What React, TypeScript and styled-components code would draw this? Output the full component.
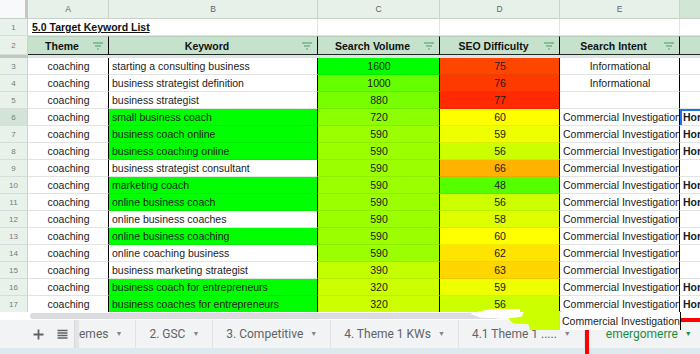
import styled, { createGlobalStyle } from 'styled-components';

const GlobalStyle = createGlobalStyle`
  html, body { margin: 0; padding: 0; }
  body {
    width: 700px;
    height: 354px;
    overflow: hidden;
    background: #fff;
    font-family: 'Liberation Sans', Arial, sans-serif;
  }
`;

const COLS = '28px 81px 209px 122px 120px 120px 40px';
const GRID = '#e2e3e3';

type Row = {
  kw: string;
  kwGreen: boolean;
  vol: number;
  volBg: string;
  diff: number;
  diffBg: string;
  intent: string;
  f: string;
};

const rows: Row[] = [
  { kw: 'starting a consulting business', kwGreen: false, vol: 1600, volBg: '#00ff00', diff: 75, diffBg: '#ff4600', intent: 'Informational', f: '' },
  { kw: 'business strategist definition', kwGreen: false, vol: 1000, volBg: '#66ff00', diff: 76, diffBg: '#ff3a00', intent: 'Informational', f: '' },
  { kw: 'business strategist', kwGreen: false, vol: 880, volBg: '#77ff00', diff: 77, diffBg: '#ff2a00', intent: '', f: '' },
  { kw: 'small business coach', kwGreen: true, vol: 720, volBg: '#8cff00', diff: 60, diffBg: '#ffff00', intent: 'Commercial Investigation', f: 'Hor' },
  { kw: 'business coach online', kwGreen: true, vol: 590, volBg: '#9cff00', diff: 59, diffBg: '#eeff00', intent: 'Commercial Investigation', f: 'Hor' },
  { kw: 'business coaching online', kwGreen: true, vol: 590, volBg: '#9cff00', diff: 56, diffBg: '#ccff00', intent: 'Commercial Investigation', f: 'Hor' },
  { kw: 'business strategist consultant', kwGreen: false, vol: 590, volBg: '#9cff00', diff: 66, diffBg: '#ffb200', intent: 'Commercial Investigation', f: '' },
  { kw: 'marketing coach', kwGreen: true, vol: 590, volBg: '#9cff00', diff: 48, diffBg: '#55ff00', intent: 'Commercial Investigation', f: 'Hor' },
  { kw: 'online business coach', kwGreen: true, vol: 590, volBg: '#9cff00', diff: 56, diffBg: '#ccff00', intent: 'Commercial Investigation', f: 'Hor' },
  { kw: 'online business coaches', kwGreen: false, vol: 590, volBg: '#9cff00', diff: 58, diffBg: '#ddff00', intent: 'Commercial Investigation', f: '' },
  { kw: 'online business coaching', kwGreen: true, vol: 590, volBg: '#9cff00', diff: 60, diffBg: '#ffff00', intent: 'Commercial Investigation', f: 'Hor' },
  { kw: 'online coaching business', kwGreen: false, vol: 590, volBg: '#9cff00', diff: 62, diffBg: '#ffe400', intent: 'Commercial Investigation', f: '' },
  { kw: 'business marketing strategist', kwGreen: false, vol: 390, volBg: '#c4ff00', diff: 63, diffBg: '#ffd600', intent: 'Commercial Investigation', f: '' },
  { kw: 'business coach for entrepreneurs', kwGreen: true, vol: 320, volBg: '#ccff00', diff: 59, diffBg: '#eeff00', intent: 'Commercial Investigation', f: 'Hor' },
  { kw: 'business coaches for entrepreneurs', kwGreen: true, vol: 320, volBg: '#ccff00', diff: 56, diffBg: '#ccff00', intent: 'Commercial Investigation', f: 'Hor' },
];

const headers = ['Theme', 'Keyword', 'Search Volume', 'SEO Difficulty', 'Search Intent'];

const tabs = ['emes', '2. GSC', '3. Competitive', '4. Theme 1 KWs', '4.1 Theme 1 .....'];

const Page = styled.div`
  position: relative;
  width: 700px;
  height: 354px;
  overflow: hidden;
  display: flex;
  flex-direction: column;
`;

const Sheet = styled.div`
  height: 312px;
  flex: none;
  overflow: hidden;
  display: flex;
  flex-direction: column;
`;

const GridRow = styled.div<{ $h: number }>`
  display: grid;
  grid-template-columns: ${COLS};
  height: ${(p) => p.$h}px;
  flex: none;
`;

const Corner = styled.div`
  background: #f8f9fa;
  border-right: 3px solid #c4c7c5;
  border-bottom: 1px solid #c7cfc9;
`;

const ColLetter = styled.div<{ $sel?: boolean }>`
  background: ${(p) => (p.$sel ? '#d2e6d6' : '#e8f0ea')};
  border-right: 1px solid #cbd3cd;
  border-bottom: 1px solid #c7cfc9;
  color: #5f6368;
  font-size: 8.5px;
  display: flex;
  align-items: center;
  justify-content: center;
`;

const RowNum = styled.div<{ $sel?: boolean }>`
  background: ${(p) => (p.$sel ? '#d3e3d7' : '#e9f1eb')};
  border-right: 1px solid #cbd3cd;
  border-bottom: 1px solid #d6ddd8;
  color: #777b78;
  font-size: 8px;
  display: flex;
  align-items: center;
  justify-content: center;
`;

const Cell = styled.div<{ $bg?: string; $center?: boolean; $edge?: boolean; $bold?: boolean; $sel?: boolean }>`
  box-sizing: border-box;
  background: ${(p) => p.$bg ?? '#fff'};
  border-right: 1px solid ${(p) => (p.$edge ? '#000' : GRID)};
  border-bottom: 1px solid ${(p) => (p.$bg ? 'rgba(0, 0, 0, 0.07)' : GRID)};
  box-shadow: ${(p) => (p.$sel ? 'inset 2px 2px 0 #1a73e8' : 'none')};
  color: #1b1b1b;
  font-size: 10.5px;
  font-weight: ${(p) => (p.$bold ? 700 : 400)};
  padding: 0 2px 0 3px;
  display: flex;
  align-items: center;
  justify-content: ${(p) => (p.$center ? 'center' : 'flex-start')};
  white-space: nowrap;
  overflow: hidden;
`;

const Title = styled.div`
  grid-column: span 2;
  border-right: 1px solid ${GRID};
  border-bottom: 1px solid ${GRID};
  font-size: 10.5px;
  font-weight: 700;
  text-decoration: underline;
  color: #111;
  padding-left: 4px;
  display: flex;
  align-items: center;
`;

const HeadCell = styled.div<{ $edge?: boolean }>`
  background: #c6e2cc;
  border-right: 1px solid ${(p) => (p.$edge ? '#000' : '#c6e2cc')};
  border-bottom: 1px solid #1f2a22;
  border-top: 1px solid #b8cfbd;
  display: flex;
  align-items: center;
  padding: 0 5px 0 3px;
  font-size: 10.5px;
  font-weight: 700;
  color: #111;
  white-space: nowrap;
  overflow: hidden;
`;

const HeadLabel = styled.span`
  flex: 1;
  text-align: center;
`;

const FreezeBand = styled.div<{ $dark?: boolean }>`
  background: ${(p) => (p.$dark ? '#c2c7c4' : '#e1e4e6')};
`;

const ScrollTrack = styled.div`
  height: 8px;
  flex: none;
  background: #fff;
  display: flex;
  align-items: center;
  padding-left: 30px;
`;

const ScrollThumb = styled.div`
  width: 480px;
  height: 6px;
  border-radius: 3px;
  background: #dadce0;
`;

const TabBar = styled.div`
  height: 28px;
  flex: none;
  background: #f1f3f4;
  display: flex;
  align-items: stretch;
  padding-left: 26px;
  overflow: hidden;
  font-family: Roboto, 'Liberation Sans', Arial, sans-serif;
`;

const IconBtn = styled.div`
  width: 24px;
  flex: none;
  display: flex;
  align-items: center;
  justify-content: center;
`;

const TabDivider = styled.div`
  width: 4px;
  flex: none;
  background: #e2e4e5;
  border-left: 1px solid #d6d8d9;
`;

const Tab = styled.div<{ $active?: boolean; $first?: boolean }>`
  flex: none;
  display: flex;
  align-items: center;
  gap: 7px;
  padding: 0 13px 0 ${(p) => (p.$first ? 0 : p.$active ? 21 : 13)}px;
  border-right: 1px solid #e0e2e3;
  color: ${(p) => (p.$active ? '#1e8e3e' : '#5f6368')};
  font-size: 12px;
  font-weight: 400;
  white-space: nowrap;
`;

const Caret = styled.span<{ $active?: boolean }>`
  font-size: 7px;
  color: ${(p) => (p.$active ? '#1e8e3e' : '#80868b')};
`;

const FooterStrip = styled.div`
  flex: 1;
  background: #dde9ec;
`;

const RedBox = styled.div`
  position: absolute;
  left: 585px;
  top: 318px;
  width: 130px;
  height: 50px;
  border: 4px solid #ff0000;
  z-index: 1;
`;

const GlitchTear = styled.div`
  position: absolute;
  left: 470px;
  top: 309px;
  width: 50px;
  height: 12px;
  background: #fff;
  clip-path: polygon(0 40%, 40% 0, 100% 0, 100% 100%, 55% 80%, 20% 70%);
  z-index: 2;
`;

const GlitchChip = styled.div`
  position: absolute;
  left: 508px;
  top: 311px;
  width: 54px;
  height: 19px;
  background: #ccff00;
  clip-path: polygon(30% 0, 100% 0, 100% 100%, 40% 100%, 38% 70%, 10% 66%, 0 40%, 25% 30%);
  z-index: 2;
`;

const GhostCell = styled.div`
  position: absolute;
  left: 559px;
  top: 312px;
  width: 122px;
  height: 18px;
  box-sizing: border-box;
  background: #fff;
  border-left: 1px solid #d0d0d0;
  border-right: 1px solid #000;
  font-size: 10.5px;
  color: #1b1b1b;
  padding-left: 2px;
  display: flex;
  align-items: center;
  white-space: nowrap;
  overflow: hidden;
  z-index: 2;
`;

function FilterIcon() {
  return (
    <svg width="10" height="8" viewBox="0 0 10 8">
      <g stroke="#5aa574" strokeWidth="1.2">
        <line x1="0" y1="1" x2="10" y2="1" />
        <line x1="2" y1="4" x2="8" y2="4" />
        <line x1="4" y1="7" x2="6" y2="7" />
      </g>
    </svg>
  );
}

function PlusIcon() {
  return (
    <svg width="11" height="11" viewBox="0 0 11 11">
      <path d="M5.5 0.5v10M0.5 5.5h10" stroke="#5f6368" strokeWidth="1.8" />
    </svg>
  );
}

function ListIcon() {
  return (
    <svg width="11" height="11" viewBox="0 0 11 11">
      <path d="M0.5 1.5h10M0.5 4h10M0.5 6.5h10M0.5 9h10" stroke="#5f6368" strokeWidth="1.3" />
    </svg>
  );
}

export default function App() {
  return (
    <Page>
      <GlobalStyle />
      <Sheet>
        <GridRow $h={19}>
          <Corner />
          {['A', 'B', 'C', 'D', 'E', 'F'].map((c) => (
            <ColLetter key={c} $sel={c === 'F'}>
              {c === 'F' ? '' : c}
            </ColLetter>
          ))}
        </GridRow>

        <GridRow $h={17}>
          <RowNum>1</RowNum>
          <Title>5.0 Target Keyword List</Title>
          <Cell />
          <Cell />
          <Cell />
          <Cell />
        </GridRow>

        <GridRow $h={19}>
          <RowNum>2</RowNum>
          {headers.map((h) => (
            <HeadCell key={h} $edge>
              <HeadLabel>{h}</HeadLabel>
              <FilterIcon />
            </HeadCell>
          ))}
          <HeadCell />
        </GridRow>

        <GridRow $h={3}>
          <FreezeBand $dark />
          <FreezeBand />
          <FreezeBand />
          <FreezeBand />
          <FreezeBand />
          <FreezeBand />
          <FreezeBand />
        </GridRow>

        {rows.map((r, i) => (
          <GridRow $h={17} key={i}>
            <RowNum $sel={i === 3}>{i + 3}</RowNum>
            <Cell $center $edge>
              coaching
            </Cell>
            <Cell $edge $bg={r.kwGreen ? '#00ff00' : undefined}>
              {r.kw}
            </Cell>
            <Cell $center $edge $bg={r.volBg}>
              {r.vol}
            </Cell>
            <Cell $center $edge $bg={r.diffBg}>
              {r.diff}
            </Cell>
            <Cell $center={r.intent === 'Informational'} $edge>
              {r.intent}
            </Cell>
            <Cell $bold $sel={i === 3}>
              {r.f}
            </Cell>
          </GridRow>
        ))}
      </Sheet>

      <ScrollTrack>
        <ScrollThumb />
      </ScrollTrack>

      <TabBar>
        <IconBtn>
          <PlusIcon />
        </IconBtn>
        <IconBtn>
          <ListIcon />
        </IconBtn>
        <TabDivider />
        {tabs.map((t, i) => (
          <Tab key={t} $first={i === 0}>
            <span>{t}</span>
            <Caret>▼</Caret>
          </Tab>
        ))}
        <Tab $active>
          <span>emergomerre</span>
          <Caret $active>▼</Caret>
        </Tab>
      </TabBar>
      <FooterStrip />

      <RedBox />
      <GlitchTear />
      <GlitchChip />
      <GhostCell>Commercial Investigation</GhostCell>
    </Page>
  );
}
